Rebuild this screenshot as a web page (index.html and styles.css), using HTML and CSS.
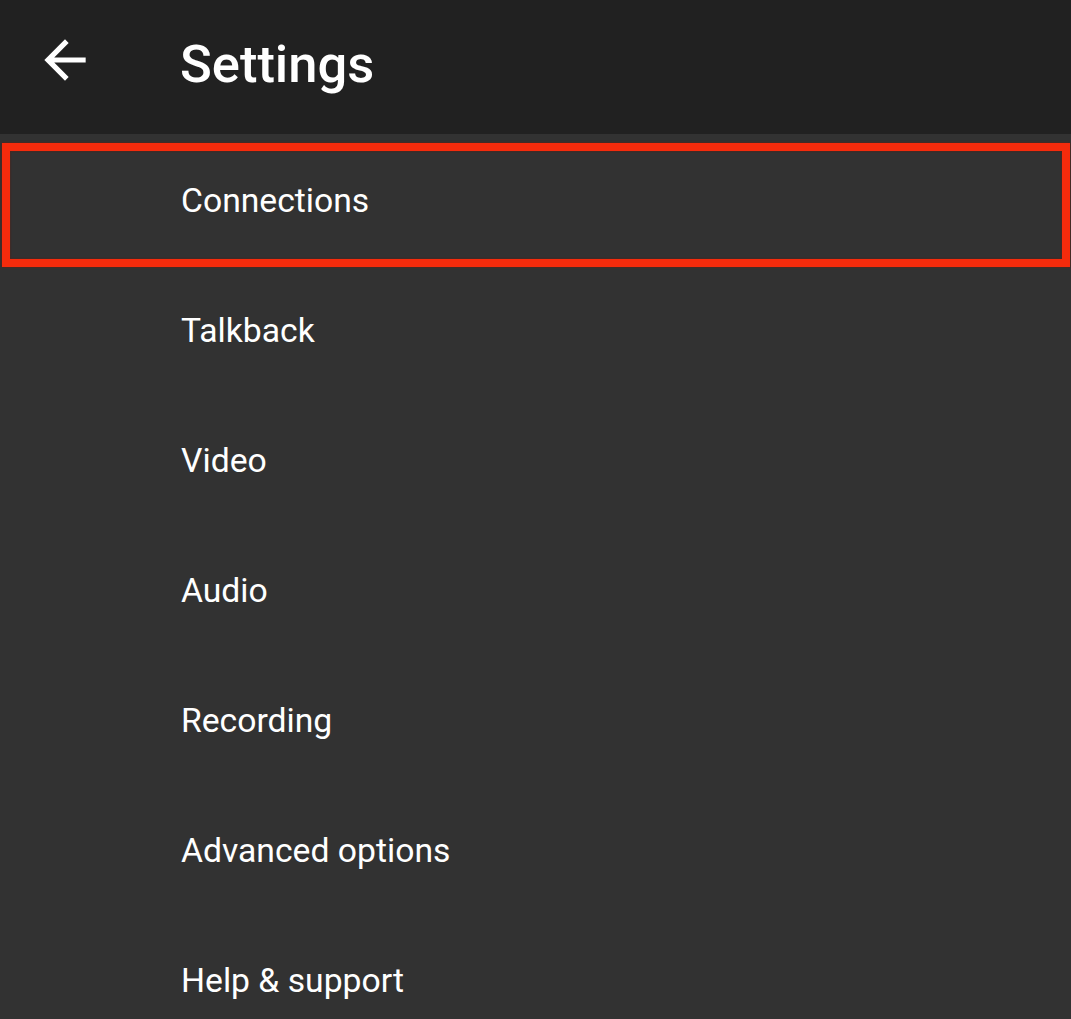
FILE: index.html
```html
<!DOCTYPE html>
<html lang="en">
<head>
<meta charset="utf-8">
<title>Settings</title>
<link rel="stylesheet" href="styles.css">
</head>
<body>
<div class="app">
  <header class="topbar">
    <button class="back" aria-label="Back">
      <svg width="62" height="62" viewBox="0 0 24 24" fill="#fff">
        <path d="M20 11H7.83l5.59-5.59L12 4l-8 8 8 8 1.41-1.41L7.83 13H20v-2z"/>
      </svg>
    </button>
    <h1 class="title">Settings</h1>
  </header>
  <ul class="menu">
    <li class="item highlighted">Connections</li>
    <li class="item">Talkback</li>
    <li class="item">Video</li>
    <li class="item">Audio</li>
    <li class="item">Recording</li>
    <li class="item">Advanced options</li>
    <li class="item">Help &amp; support</li>
  </ul>
</div>
</body>
</html>
```

FILE: styles.css
```css
html, body {
  margin: 0;
  padding: 0;
  background: #323232;
  height: 100%;
  overflow: hidden;
}
.app {
  font-family: Roboto, "Liberation Sans", sans-serif;
  color: #fff;
}
.topbar {
  height: 134px;
  background: #212121;
  display: flex;
  align-items: center;
}
.back {
  background: none;
  border: 0;
  padding: 0;
  margin-left: 34px;
  width: 62px;
  height: 62px;
  display: flex;
  margin-top: -14px;
}
.title {
  margin: -6px 0 0 84px;
  font-size: 52.5px;
  font-weight: 500;
}
.menu {
  list-style: none;
  margin: 0;
  padding: 0;
  padding-top: 1px;
}
.item {
  height: 130px;
  display: flex;
  align-items: center;
  padding-left: 181px;
  font-size: 33.7px;
  box-sizing: border-box;
}
.highlighted {
  position: relative;
}
.highlighted::after {
  content: "";
  position: absolute;
  left: 2px;
  right: 1px;
  top: 8px;
  bottom: -2px;
  border: 8px solid #f52b0c;
  box-shadow: 0 0 2px rgba(120, 20, 0, 0.8), inset 0 0 2px rgba(120, 20, 0, 0.8);
}
```
